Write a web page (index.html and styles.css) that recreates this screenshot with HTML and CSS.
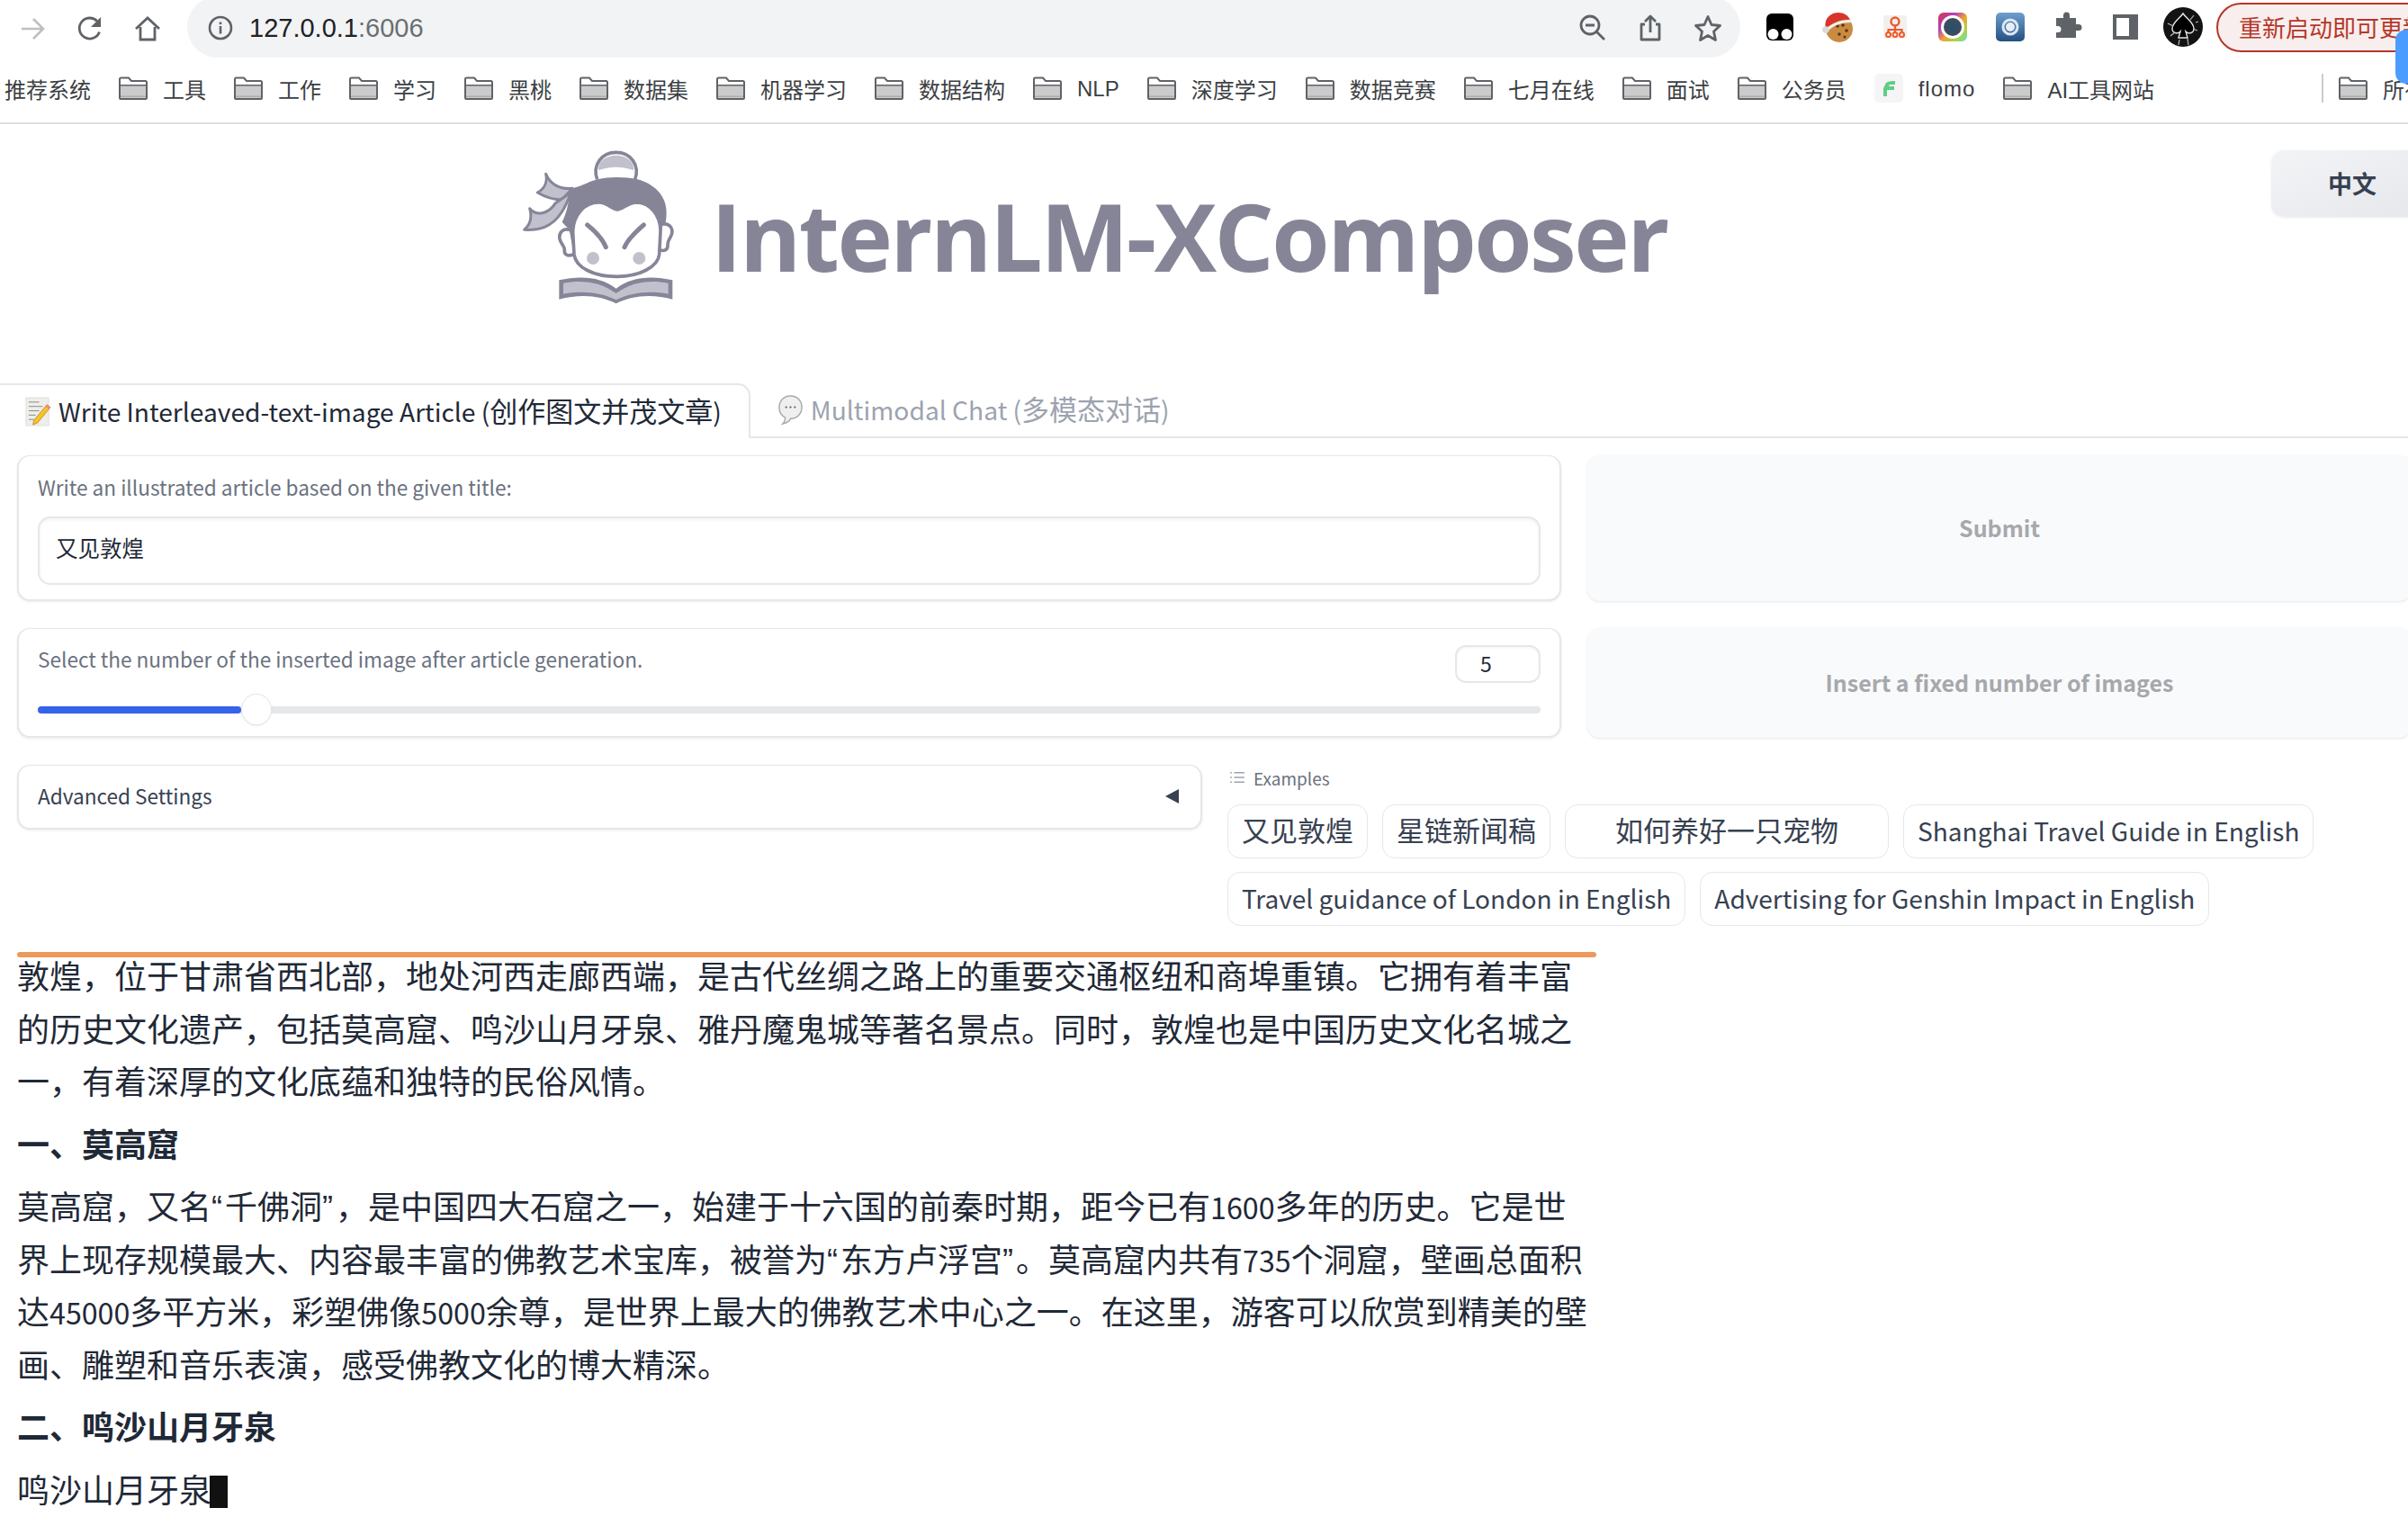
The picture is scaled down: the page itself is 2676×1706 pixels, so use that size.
FILE: index.html
```html
<!DOCTYPE html>
<html>
<head>
  <meta charset="UTF-8">
  <title>InternLM-XComposer</title>
  <link rel="stylesheet" href="styles.css">
</head>
<body>
  <!-- shared bookmark folder -->
  <svg class="defs" width="0" height="0">
    <symbol id="folder" viewBox="0 0 32 26">
      <path d="M1 24V3q0-1.500 1.500-1.500H11l3 3.500h15.500Q31 5 31 6.500V24q0 1-1 1H2q-1 0-1-1z" fill="#fff" stroke="#5f6368" stroke-width="2"/>
      <rect x="2" y="10" width="28" height="14" fill="#cbcbcb"/>
      <rect x="2" y="9" width="28" height="1.500" fill="#5f6368"/>
      <rect x="2" y="21.500" width="28" height="1.500" fill="#aeaeae"/>
    </symbol>
  </svg>

  <!-- Browser toolbar -->
  <div class="toolbar">
    <svg class="nav-icon" viewBox="0 0 32 32"><path d="M4 16h24M17 5l11 11-11 11" fill="none" stroke="#bdbfc1" stroke-width="2.600"/></svg>
    <svg class="nav-icon" viewBox="0 0 32 32"><path d="M26.500 19.500A11.500 11.500 0 1 1 24 7.500" fill="none" stroke="#5f6368" stroke-width="2.800"/><path d="M28 3v11H17z" fill="#5f6368"/></svg>
    <svg class="nav-icon" viewBox="0 0 32 32"><path d="M3 16 16 4l13 12M8 14v14h16V14" fill="none" stroke="#5f6368" stroke-width="2.800"/></svg>
    <div class="address-bar">
      <svg class="info-icon" viewBox="0 0 28 28"><circle cx="14" cy="14" r="12" fill="none" stroke="#5f6368" stroke-width="2.600"/><rect x="12.700" y="12" width="2.600" height="8.500" fill="#5f6368"/><rect x="12.700" y="7.500" width="2.600" height="2.600" fill="#5f6368"/></svg>
      <span class="url">127.0.0.1<span class="url-port">:6006</span></span>
      <div class="address-actions">
        <svg class="nav-icon" viewBox="0 0 32 32"><circle cx="13" cy="13" r="10" fill="none" stroke="#5f6368" stroke-width="2.800"/><path d="M8 13h10M20 20l9 9" fill="none" stroke="#5f6368" stroke-width="2.800"/></svg>
        <svg class="nav-icon" viewBox="0 0 32 32"><path d="M10 12H6v17h20V12h-4M16 21V3M10 9l6-6 6 6" fill="none" stroke="#5f6368" stroke-width="2.800" stroke-linejoin="round"/></svg>
        <svg class="nav-icon" viewBox="0 0 32 32"><path d="M16 3.500 20 12.500l9.500 1-7 6.500 2 9.500-8.500-5-8.500 5 2-9.500-7-6.500 9.500-1z" fill="none" stroke="#5f6368" stroke-width="2.800" stroke-linejoin="round"/></svg>
      </div>
    </div>
    <div class="extensions">
      <!-- tampermonkey -->
      <svg class="ext-icon" viewBox="0 0 44 44"><rect x="7" y="7" width="30" height="30" rx="6" fill="#000"/><circle cx="14.500" cy="30" r="6" fill="#fff"/><circle cx="29.500" cy="30" r="6" fill="#fff"/></svg>
      <!-- cookie -->
      <svg class="ext-icon" viewBox="0 0 44 44">
        <circle cx="24" cy="24" r="15" fill="#c98b42"/>
        <circle cx="22" cy="21" r="1.800" fill="#5b3415"/><circle cx="28" cy="20" r="1.800" fill="#5b3415"/><circle cx="32" cy="26" r="1.800" fill="#5b3415"/><circle cx="24" cy="30" r="1.800" fill="#5b3415"/><circle cx="30" cy="33" r="1.500" fill="#5b3415"/>
        <path d="M9 25C6 12 15 6 23 6c6 0 11 3 13 8-9-1-19 2-27 11z" fill="#d9342b"/>
        <path d="M10 23c7-6 17-9 26-9l1 3c-10 0-19 3-25 9z" fill="#f1efe9"/>
        <circle cx="9" cy="25" r="3.800" fill="#dcdad4"/>
      </svg>
      <!-- org chart -->
      <svg class="ext-icon" viewBox="0 0 44 44">
        <rect x="9" y="9" width="26" height="26" rx="3" fill="#f1f0ef"/>
        <circle cx="22" cy="16" r="4.500" fill="none" stroke="#ee5a2c" stroke-width="2.400"/>
        <path d="M22 20.500V29M14.500 29v-4h15v4" fill="none" stroke="#ee5a2c" stroke-width="2.200"/>
        <circle cx="14.500" cy="30.500" r="2.500" fill="none" stroke="#ee5a2c" stroke-width="2"/><circle cx="22" cy="30.500" r="2.500" fill="none" stroke="#ee5a2c" stroke-width="2"/><circle cx="29.500" cy="30.500" r="2.500" fill="none" stroke="#ee5a2c" stroke-width="2"/>
      </svg>
      <!-- colour lens -->
      <svg class="ext-icon" viewBox="0 0 44 44">
        <defs><linearGradient id="lens" x1="0" y1="0" x2="1" y2="1"><stop offset="0" stop-color="#d8343d"/><stop offset=".3" stop-color="#b23fc0"/><stop offset=".55" stop-color="#f0a52c"/><stop offset=".8" stop-color="#a4d653"/><stop offset="1" stop-color="#5fdbd0"/></linearGradient></defs>
        <rect x="6" y="6" width="32" height="32" rx="6" fill="url(#lens)"/>
        <circle cx="22" cy="22" r="13" fill="#fff"/><circle cx="22" cy="22" r="10" fill="#3b4c5e"/><circle cx="22" cy="22" r="3.500" fill="#24507a"/>
      </svg>
      <!-- blue reload -->
      <svg class="ext-icon" viewBox="0 0 44 44">
        <defs><linearGradient id="blueTile" x1="0" y1="0" x2="0" y2="1"><stop offset="0" stop-color="#6e9fd0"/><stop offset="1" stop-color="#24507f"/></linearGradient></defs>
        <rect x="6" y="6" width="32" height="32" rx="5" fill="url(#blueTile)"/>
        <circle cx="22" cy="22" r="8" fill="none" stroke="#dbe8f4" stroke-width="3"/>
        <circle cx="22" cy="22" r="5" fill="#e9eef3"/>
      </svg>
      <!-- puzzle -->
      <svg class="ext-icon" viewBox="0 0 44 44"><path d="M10 16h8v-3a3.500 3.500 0 0 1 7 0v3h7v7h3a3.500 3.500 0 0 1 0 7h-3v8H10v-6h2a3.500 3.500 0 0 0 0-7h-2z" fill="#5f6368" transform="translate(-1 -4)"/></svg>
      <!-- side panel -->
      <svg class="ext-icon" viewBox="0 0 44 44"><rect x="8" y="8" width="28" height="28" fill="#5f6368"/><rect x="12" y="12" width="14" height="20" fill="#fff"/></svg>
      <!-- avatar -->
      <svg class="ext-icon" viewBox="0 0 44 44">
        <circle cx="22" cy="22" r="22" fill="#131313"/>
        <path d="M22 7c4 6 12 10 12 17 0 5-6 6-9 3l2 7h-10l2-7c-3 3-9 2-9-3 0-7 8-11 12-17z" fill="#000" stroke="#e6e6e6" stroke-width="1.400"/>
        <path d="M5 18l6 3M34 9l-4 5M38 26l-5-2M8 32l5-4M17 42l1-6M28 42l-1-7M36 17l3-1" stroke="#bbb" stroke-width="1.200"/>
      </svg>
    </div>
    <div class="restart-btn">重新启动即可更新</div>
  </div>

  <!-- Bookmarks bar -->
  <div class="bookmarks">
    <span class="mark">推荐系统</span>
    <span class="mark"><svg class="folder"><use href="#folder"/></svg>工具</span>
    <span class="mark"><svg class="folder"><use href="#folder"/></svg>工作</span>
    <span class="mark"><svg class="folder"><use href="#folder"/></svg>学习</span>
    <span class="mark"><svg class="folder"><use href="#folder"/></svg>黑桃</span>
    <span class="mark"><svg class="folder"><use href="#folder"/></svg>数据集</span>
    <span class="mark"><svg class="folder"><use href="#folder"/></svg>机器学习</span>
    <span class="mark"><svg class="folder"><use href="#folder"/></svg>数据结构</span>
    <span class="mark"><svg class="folder"><use href="#folder"/></svg><span class="mark-latin">NLP</span></span>
    <span class="mark"><svg class="folder"><use href="#folder"/></svg>深度学习</span>
    <span class="mark"><svg class="folder"><use href="#folder"/></svg>数据竞赛</span>
    <span class="mark"><svg class="folder"><use href="#folder"/></svg>七月在线</span>
    <span class="mark"><svg class="folder"><use href="#folder"/></svg>面试</span>
    <span class="mark"><svg class="folder"><use href="#folder"/></svg>公务员</span>
    <span class="mark"><svg class="flomo" viewBox="0 0 32 32"><rect width="32" height="32" rx="5" fill="#f5f5f5"/><path d="M12 12c1-3 4-4 11-4v4h-6l-1 2h6v4h-8v7h-4v-9z" fill="#5fce85"/></svg><span class="mark-latin mark-wide">flomo</span></span>
    <span class="mark"><svg class="folder"><use href="#folder"/></svg>AI工具网站</span>
    <span class="bookmark-sep"></span>
    <span class="mark"><svg class="folder"><use href="#folder"/></svg>所有书签</span>
  </div>
  <div class="update-tab"></div>

  <div class="page">
    <div class="lang-btn">中文</div>

    <!-- Logo and title -->
    <div class="banner">
      <svg class="logo" viewBox="0 0 630 600">
        <path d="M305 148C288 100 320 58 368 58c48 0 80 42 63 90" fill="#fff" stroke="#868598" stroke-width="11"/>
        <path d="M310 118c-4-30 25-50 58-50s62 20 58 50c-38-14-78-14-116 0z" fill="#c1c1cd"/>
        <path d="M134 130c14 34 46 52 88 48l-34 38c-30 0-58-10-82-24 22-12 34-34 28-62z" fill="#c1c1cd" stroke="#868598" stroke-width="9" stroke-linejoin="round"/>
        <path d="M80 245c22 26 62 20 86-18l52-36c-18 48-40 96-88 116-20 8-44 10-68 9 20-18 26-44 18-71z" fill="#c1c1cd" stroke="#868598" stroke-width="9" stroke-linejoin="round"/>
        <path d="M215 178c34-2 56-22 92-30 42-10 92-8 132 0 50 12 92 50 96 98 3 30-2 58-14 80H228c-12-10-30-22-40-36 14-24 24-70 27-112z" fill="#868598"/>
        <path d="M218 318c-24-10-42 6-38 28 3 18 18 24 16 40-1 12 10 22 36 10z" fill="#fff" stroke="#868598" stroke-width="11"/>
        <path d="M518 298c24-6 40 8 36 30-4 18-16 24-14 40 1 14-10 24-36 12z" fill="#fff" stroke="#868598" stroke-width="11"/>
        <path d="M224 325c0-60 40-100 86-100 28 0 44 22 62 24 18-2 38-24 66-24 46 2 78 46 78 95l-4 78c-4 42-66 74-142 74-78 0-136-30-142-74z" fill="#fff" stroke="#868598" stroke-width="11"/>
        <path d="M272 300c28 22 52 50 62 74M460 300c-28 24-54 50-64 74" fill="none" stroke="#868598" stroke-width="15" stroke-linecap="round"/>
        <circle cx="291" cy="411" r="21" fill="#c1c1cd"/>
        <circle cx="445" cy="411" r="21" fill="#c1c1cd"/>
        <path d="M178 484c70-16 140-12 190 28 50-40 120-44 188-28v64c-68-18-132-14-188 14-56-28-120-32-190-14z" fill="#868598"/>
        <path d="M192 494c62-12 126-4 176 34 50-38 114-46 174-34v36c-60-12-122-6-174 20-52-26-114-32-176-20z" fill="#c1c1cd"/>
      </svg>
      <div class="title">InternLM-XComposer</div>
    </div>

    <!-- Tabs -->
    <div class="tabs">
      <div class="tab tab-active">
        <svg class="tab-icon" viewBox="0 0 30 34">
          <rect x="1" y="1" width="26" height="32" fill="#eeeeea" stroke="#ddd"/>
          <path d="M4 6h12M4 11h16M4 16h12M4 21h8M4 26h6" stroke="#888" stroke-width="1"/>
          <path d="M25 9l4 3-15 18-5 2 1-5z" fill="#f4c430" stroke="#c98f1a" stroke-width="1"/>
          <path d="M25 9l4 3-2 2-4-3z" fill="#e98a94"/>
        </svg>
        <span class="tab-text">Write Interleaved-text-image Article (<span class="cjk">创作图文并茂文章</span>)</span>
      </div>
      <div class="tab">
        <svg class="tab-icon" viewBox="0 0 30 34">
          <path d="M15 1C7 1 2 7 2 14c0 6 3 10 7 12 0 3-1 5-3 7 4-1 8-3 9-6 8 0 13-6 13-13S23 1 15 1z" fill="#efefef" stroke="#a9a9a9" stroke-width="1.500"/>
          <circle cx="10" cy="14" r="1.200" fill="#666"/><circle cx="15" cy="14" r="1.200" fill="#666"/><circle cx="20" cy="14" r="1.200" fill="#666"/>
        </svg>
        <span class="tab-text">Multimodal Chat (<span class="cjk">多模态对话</span>)</span>
      </div>
      <div class="tab-rest"></div>
    </div>

    <!-- Title and slider forms with their buttons -->
    <div class="form-grid">
      <div class="panel title-panel">
        <div class="label">Write an illustrated article based on the given title:</div>
        <div class="text-input">又见敦煌</div>
      </div>
      <div class="big-btn">Submit</div>
      <div class="panel slider-panel">
        <div class="slider-head">
          <div class="label">Select the number of the inserted image after article generation.</div>
          <div class="number-input">5</div>
        </div>
        <div class="slider-track">
          <div class="slider-fill" style="width: 226px"></div>
          <div class="slider-thumb"></div>
        </div>
      </div>
      <div class="big-btn">Insert a fixed number of images</div>
    </div>

    <div class="lower-row">
      <div class="panel accordion">
        <span class="accordion-text">Advanced Settings</span>
        <span class="caret"></span>
      </div>
      <div class="examples">
        <div class="examples-label">
          <svg class="list-icon" viewBox="0 0 18 16"><path d="M5 2h13M5 8h13M5 14h13M0 2h2M0 8h2M0 14h2" stroke="#9ca3af" stroke-width="1.500"/></svg>
          Examples
        </div>
        <div class="chips">
          <span class="chip">又见敦煌</span>
          <span class="chip">星链新闻稿</span>
          <span class="chip chip-wide">如何养好一只宠物</span>
          <span class="chip chip-en">Shanghai Travel Guide in English</span>
          <span class="chip chip-en">Travel guidance of London in English</span>
          <span class="chip chip-en">Advertising for Genshin Impact in English</span>
        </div>
      </div>
    </div>

    <!-- Generated article -->
    <div class="article">
      <div class="progress-rule"></div>
      <p class="first">敦煌，位于甘肃省西北部，地处河西走廊西端，是古代丝绸之路上的重要交通枢纽和商埠重镇。它拥有着丰富的历史文化遗产，包括莫高窟、鸣沙山月牙泉、雅丹魔鬼城等著名景点。同时，敦煌也是中国历史文化名城之一，有着深厚的文化底蕴和独特的民俗风情。</p>
      <p><strong>一、莫高窟</strong></p>
      <p>
        <span class="line">莫高窟，又名<span class="quote">“</span>千佛洞<span class="quote">”</span>，是中国四大石窟之一，始建于十六国的前秦时期，距今已有<span class="num">1600</span>多年的历史。它是世</span>
        <span class="line">界上现存规模最大、内容最丰富的佛教艺术宝库，被誉为<span class="quote">“</span>东方卢浮宫<span class="quote">”</span>。莫高窟内共有<span class="num">735</span>个洞窟，壁画总面积</span>
        <span class="line">达<span class="num">45000</span>多平方米，彩塑佛像<span class="num">5000</span>余尊，是世界上最大的佛教艺术中心之一。在这里，游客可以欣赏到精美的壁</span>
        <span class="line">画、雕塑和音乐表演，感受佛教文化的博大精深。</span>
      </p>
      <p><strong>二、鸣沙山月牙泉</strong></p>
      <p>鸣沙山月牙泉<span class="cursor"></span></p>
    </div>
  </div>
</body>
</html>
```

FILE: styles.css
```css
html, body {
  margin: 0;
  padding: 0;
  height: 1706px;
  overflow: hidden;
  background: #fff;
}
body {
  font-family: "Noto Sans CJK SC", "Noto Sans", sans-serif;
  color: #1f2937;
}
.defs { position: absolute; }

/* Browser toolbar */
.toolbar {
  height: 64px;
  display: flex;
  align-items: center;
  padding-left: 20px;
  gap: 32px;
  overflow: hidden;
  white-space: nowrap;
}
.nav-icon { width: 32px; height: 32px; flex: none; }
.address-bar {
  flex: none;
  width: 1726px;
  height: 68px;
  margin: -4px 0 0 -4px;
  box-sizing: border-box;
  padding: 2px 20px 0 23px;
  background: #f1f3f4;
  border-radius: 34px;
  display: flex;
  align-items: center;
}
.info-icon { width: 28px; height: 28px; margin-right: 18px; }
.url {
  font-family: "Liberation Sans", sans-serif;
  font-size: 29px;
  color: #202124;
}
.url-port { color: #6b6e72; }
.address-actions { margin-left: auto; display: flex; gap: 32px; }
.extensions {
  display: flex;
  gap: 20px;
  margin: -4px 0 0 -10px;
}
.ext-icon { width: 44px; height: 44px; flex: none; }
.restart-btn {
  flex: none;
  margin: -4px 0 0 -17px;
  height: 51px;
  padding: 0 30px 0 23px;
  border: 2px solid #b5372a;
  border-radius: 28px;
  background: #f8eeed;
  color: #b5372a;
  font-size: 26px;
  line-height: 49px;
}

/* Bookmarks bar */
.bookmarks {
  height: 74px;
  box-sizing: border-box;
  border-bottom: 2px solid #dfdfdf;
  padding: 0 0 4px 5px;
  display: flex;
  align-items: center;
  gap: 31px;
  overflow: hidden;
  white-space: nowrap;
  font-family: "Liberation Sans", "Noto Sans CJK SC", sans-serif;
  font-size: 24px;
  color: #3c4043;
}
.mark { display: flex; align-items: center; gap: 17px; flex: none; }
.mark-latin { padding-top: 2px; }
.mark-wide { letter-spacing: 1px; }
.folder { width: 32px; height: 26px; }
.flomo { width: 32px; height: 32px; }
.bookmark-sep {
  flex: none;
  width: 2px;
  height: 32px;
  margin-left: 155px;
  margin-right: -14px;
  background: #cccccc;
}
.update-tab {
  position: absolute;
  top: 33px;
  right: -10px;
  width: 24px;
  height: 60px;
  border-radius: 14px;
  background: #4a9dff;
}

/* Page */
.page {
  position: relative;
  overflow: hidden;
  height: 1568px;
}
.lang-btn {
  position: absolute;
  top: 29px;
  right: -28px;
  width: 180px;
  height: 74px;
  border-radius: 14px;
  background: linear-gradient(to bottom right, #f3f4f6, #e5e7eb);
  box-shadow: 0 1px 3px rgba(0, 0, 0, 0.08);
  color: #374151;
  font-size: 27px;
  font-weight: 700;
  line-height: 74px;
  text-align: center;
}
.banner {
  height: 288px;
  box-sizing: border-box;
  padding-left: 562px;
  display: flex;
}
.logo { width: 210px; height: 200px; margin-top: 12px; flex: none; }
.title {
  margin: 0 0 0 18px;
  font-family: "Open Sans", sans-serif;
  font-weight: 700;
  font-size: 104px;
  letter-spacing: -2.5px;
  line-height: 142px;
  padding-top: 53px;
  color: #868598;
  white-space: nowrap;
}

/* Tabs */
.tabs { display: flex; height: 61px; font-size: 28.2px; }
.tab {
  display: flex;
  align-items: center;
  gap: 8px;
  padding: 0 30px 0 30px;
  color: #9ca3af;
  border-bottom: 2px solid #e5e7eb;
  white-space: nowrap;
}
.tab-active {
  padding-left: 28px;
  color: #1f2937;
  border: 2px solid #e5e7eb;
  border-left: none;
  border-bottom: none;
  border-radius: 0 14px 0 0;
}
.tab-text { padding-bottom: 2px; }
.cjk { font-size: 31px; line-height: 0; }
.tab-rest { flex: 1; border-bottom: 2px solid #e5e7eb; }
.tab-icon { width: 29px; height: 33px; flex: none; }

/* Form panels */
.form-grid {
  display: grid;
  grid-template-columns: 1716px 916px;
  grid-template-rows: 162px 122px;
  gap: 30px 29px;
  padding: 19px 0 0 19px;
}
.panel {
  box-sizing: border-box;
  border: 2px solid #e5e7eb;
  border-top-width: 1px;
  border-radius: 14px;
  background: #fff;
  box-shadow: 0 1px 3px rgba(0, 0, 0, 0.08);
}
.label { font-size: 22.6px; color: #6b7280; line-height: 32px; }
.title-panel { padding: 19px 21px; }
.text-input {
  margin-top: 16px;
  height: 76px;
  box-sizing: border-box;
  border: 2px solid #e5e7eb;
  border-radius: 14px;
  padding: 0 18px;
  box-shadow: inset 0 2px 4px rgba(0, 0, 0, 0.05);
  font-size: 24.5px;
  line-height: 66px;
}
.slider-panel { padding: 18px 21px; }
.slider-head { display: flex; justify-content: space-between; align-items: flex-start; }
.number-input {
  width: 95px;
  height: 42px;
  box-sizing: border-box;
  border: 2px solid #e5e7eb;
  border-radius: 12px;
  padding-left: 26px;
  box-shadow: inset 0 1px 3px rgba(0, 0, 0, 0.05);
  font-size: 23px;
  line-height: 36px;
}
.slider-track {
  position: relative;
  height: 8px;
  margin-top: 26px;
  border-radius: 4px;
  background: #e5e7eb;
}
.slider-fill { height: 100%; border-radius: 4px; background: #3563e9; }
.slider-thumb {
  position: absolute;
  left: 226px;
  top: -14px;
  width: 34px;
  height: 35px;
  box-sizing: border-box;
  border: 1px solid #e5e7eb;
  border-radius: 50%;
  background: #fff;
  box-shadow: 0 1px 2px rgba(0, 0, 0, 0.08);
}
.big-btn {
  display: flex;
  align-items: center;
  justify-content: center;
  padding-bottom: 2px;
  border-radius: 14px;
  background: #f9fafb;
  box-shadow: 0 1px 3px rgba(0, 0, 0, 0.1);
  color: #a6a8ac;
  font-size: 25px;
  font-weight: 600;
}

/* Advanced settings and examples */
.lower-row {
  display: flex;
  gap: 28px;
  padding: 30px 0 0 19px;
  height: 230px;
  box-sizing: border-box;
}
.accordion {
  width: 1317px;
  height: 72px;
  padding: 0 24px 2px 21px;
  display: flex;
  align-items: center;
  justify-content: space-between;
  font-size: 22.6px;
  color: #374151;
}
.caret {
  width: 0;
  height: 0;
  border-top: 8px solid transparent;
  border-bottom: 8px solid transparent;
  border-right: 15px solid #374151;
}
.examples { flex: 1; }
.examples-label {
  display: flex;
  align-items: center;
  gap: 10px;
  height: 28px;
  padding-left: 3px;
  font-size: 19px;
  color: #6b7280;
}
.list-icon { width: 16px; height: 14px; }
.chips {
  display: flex;
  flex-wrap: wrap;
  gap: 15px 16px;
  margin-top: 16px;
}
.chip {
  box-sizing: border-box;
  height: 60px;
  padding: 0 15px;
  border: 1px solid #e5e7eb;
  border-radius: 14px;
  font-size: 31px;
  line-height: 54px;
  color: #374151;
  white-space: nowrap;
}
.chip-wide { padding: 0 55px; }
.chip-en { font-size: 28.05px; line-height: 56px; }

/* Article */
.article { width: 1755px; margin: 8px 0 0 19px; font-size: 36px; line-height: 58.5px; }
.progress-rule { height: 6px; border-radius: 3px; background: #ed9a5e; }
.article p { margin: 0 0 11px; color: #1f2937; }
.article .first { margin-top: -10px; }
.line { display: block; white-space: nowrap; }
.quote { font-family: "Liberation Sans", sans-serif; letter-spacing: 3px; line-height: 0; }
.num { font-size: 32.2px; line-height: 0; }
.cursor {
  display: inline-block;
  width: 20px;
  height: 36px;
  margin-left: -2px;
  background: #111;
  vertical-align: -6px;
}
```
